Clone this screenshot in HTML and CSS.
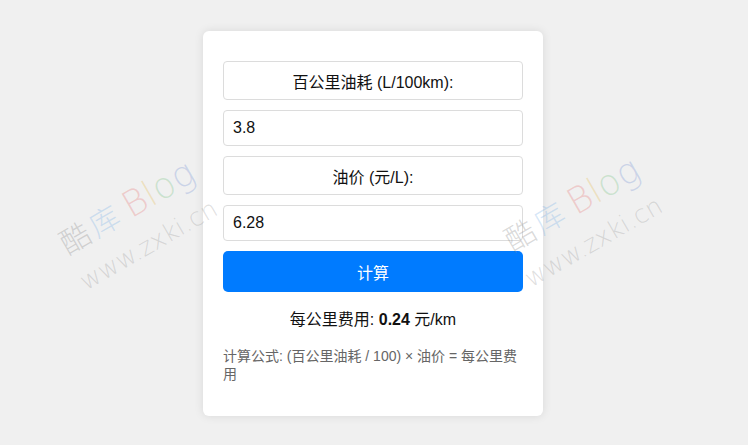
FILE: index.html
```html
<!DOCTYPE html>
<html lang="zh-CN">
<head>
<meta charset="utf-8">
<title>油耗计算器</title>
<link rel="stylesheet" href="styles.css">
</head>
<body>
<div class="card">
  <div class="fields">
    <div class="label">百公里油耗 (L/100km):</div>
    <div class="input">3.8</div>
    <div class="label">油价 (元/L):</div>
    <div class="input">6.28</div>
    <button class="btn" type="button">计算</button>
  </div>
  <p class="result">每公里费用: <strong>0.24</strong> 元/km</p>
  <p class="formula">计算公式: (百公里油耗 / 100) × 油价 = 每公里费用</p>
</div>

<div class="mark mark-left">
  <div class="mark-l1"><span class="cjk c-gray">酷</span><span class="cjk c-blue">库</span> <span class="latin c-red">B</span><span class="latin c-yellow">l</span><span class="latin c-green">o</span><span class="latin c-blue2">g</span></div>
  <div class="mark-l2">www.zxki.cn</div>
</div>
<div class="mark mark-right">
  <div class="mark-l1"><span class="cjk c-gray">酷</span><span class="cjk c-blue">库</span> <span class="latin c-red">B</span><span class="latin c-yellow">l</span><span class="latin c-green">o</span><span class="latin c-blue2">g</span></div>
  <div class="mark-l2">www.zxki.cn</div>
</div>
</body>
</html>
```

FILE: styles.css
```css
html, body {
  margin: 0;
  padding: 0;
}
body {
  background: #f0f0f0;
  font-family: "Liberation Sans", "Noto Sans CJK SC", sans-serif;
  color: #111;
  height: 445px;
  overflow: hidden;
  position: relative;
  padding-right: 2px;
}
.card {
  box-sizing: border-box;
  width: 340px;
  margin: 31px auto 0;
  padding: 30px 20px 33px;
  background: #fff;
  border-radius: 6px;
  box-shadow: 0 0 10px rgba(0, 0, 0, 0.10);
}
.fields {
  display: flex;
  flex-direction: column;
  gap: 10px;
}
.label {
  box-sizing: border-box;
  height: 39px;
  border: 1px solid #dcdcdc;
  border-radius: 4px;
  display: flex;
  align-items: center;
  justify-content: center;
  font-size: 16px;
  color: #111;
}
.input {
  box-sizing: border-box;
  height: 36px;
  border: 1px solid #dcdcdc;
  border-radius: 4px;
  display: flex;
  align-items: center;
  padding: 0 9px;
  font-size: 16px;
  color: #111;
}
.btn {
  height: 41px;
  border: none;
  border-radius: 5px;
  background: #007bff;
  color: #fff;
  font-family: inherit;
  font-size: 16px;
  padding: 0;
}
.result {
  margin: 16px 0 0;
  text-align: center;
  font-size: 16px;
  line-height: 24px;
  color: #111;
}
.result strong {
  font-weight: bold;
}
.formula {
  margin: 15px 0 0;
  font-size: 14px;
  line-height: 18px;
  color: #666;
}

.mark {
  position: absolute;
  transform: translate(-50%, -50%) rotate(-30deg);
  text-align: center;
  white-space: nowrap;
  pointer-events: none;
  font-family: "DejaVu Sans", "Noto Sans CJK SC", sans-serif;
  font-weight: 200;
}
.mark-left { left: 137px; top: 225px; }
.mark-right { left: 582px; top: 222px; }
.mark-l1 {
  line-height: 40px;
}
.mark-l1 .cjk {
  font-size: 30px;
  margin-right: 4px;
}
.mark-l1 .latin {
  font-size: 36px;
}
.mark-l2 {
  font-size: 25px;
  line-height: 34px;
  color: rgba(150, 150, 150, 0.30);
}
.c-gray { color: rgba(140, 140, 140, 0.32); }
.c-blue { color: rgba(110, 170, 230, 0.28); }
.c-red { color: rgba(230, 110, 110, 0.28); }
.c-yellow { color: rgba(230, 190, 90, 0.32); }
.c-green { color: rgba(110, 190, 120, 0.28); }
.c-blue2 { color: rgba(110, 140, 210, 0.28); }
```
